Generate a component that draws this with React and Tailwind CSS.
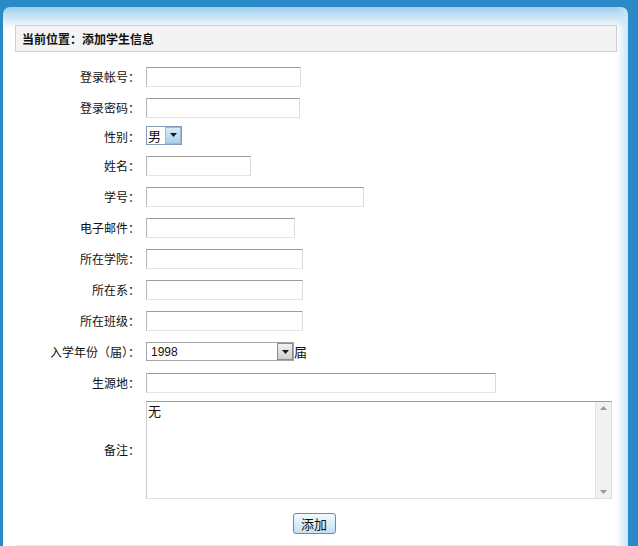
import React from 'react'

const font = { fontFamily: '"Noto Sans CJK SC", "Liberation Sans", sans-serif' }

const rows = [
  { label: '登录帐号：', width: 155 },
  { label: '登录密码：', width: 154 },
  { label: '性别：', type: 'sex' },
  { label: '姓名：', width: 105 },
  { label: '学号：', width: 218 },
  { label: '电子邮件：', width: 149 },
  { label: '所在学院：', width: 157 },
  { label: '所在系：', width: 157 },
  { label: '所在班级：', width: 157 },
  { label: '入学年份（届）：', type: 'year' },
  { label: '生源地：', width: 350 },
]

function TextBox({ width }) {
  return (
    <div
      className="h-[20px] bg-white border border-t-[#9c9c9c] border-l-[#b8b8b8] border-r-[#dcdcdc] border-b-[#e4e4e4]"
      style={{ width }}
    />
  )
}

function Arrow({ tone }) {
  return (
    <div
      className={`w-[16px] h-[17px] flex items-center justify-center border ${
        tone === 'blue'
          ? 'border-[#9ab8cf] bg-gradient-to-b from-[#d8ecf8] to-[#a9d0ea]'
          : 'border-[#8c8c8c] bg-gradient-to-b from-[#f2f2f2] to-[#cfcfcf]'
      }`}
    >
      <svg width="7" height="4" viewBox="0 0 7 4">
        <path d="M0 0h7L3.5 4z" fill="#1a1a1a" />
      </svg>
    </div>
  )
}

export default function App() {
  return (
    <div className="w-[638px] h-[546px] overflow-hidden bg-[#2a8ac8] pt-[7px] pl-[3px] pr-[10px] text-[12px] text-[#111]" style={font}>
      <div className="h-full rounded-t-[7px] bg-[linear-gradient(to_left,#c9e7f6,rgba(255,255,255,0)_12px),linear-gradient(to_bottom,#9dcdec,#ffffff_22px)] pt-[18px] pl-[12px] pr-[11px] flex flex-col">
        {/* 当前位置 */}
        <div className="h-[27px] bg-[#f3f3f3] border border-[#cfcfcf] flex items-center pl-[6px] font-bold text-[12px] text-[#111]">
          当前位置：添加学生信息
        </div>

        <div className="mt-[9px] flex flex-col">
          {rows.map(row => (
            <div key={row.label} className={`flex items-center ${row.type === 'sex' ? 'h-[27px]' : 'h-[31px]'}`}>
              <div className="w-[126px] text-right pr-[1px] leading-none">{row.label}</div>
              <div className="ml-[5px] flex items-center">
                {row.type === 'sex' && (
                  <div className="h-[19px] w-[36px] flex items-center border border-[#7f9db9] bg-white -mt-[3px]">
                    <span className="pl-[1px] w-[18px] text-[13px] leading-none">男</span>
                    <Arrow tone="blue" />
                  </div>
                )}
                {row.type === 'year' && (
                  <>
                    <div className="h-[19px] w-[148px] flex items-center justify-between border border-[#a5a5a5] bg-white">
                      <span className="pl-[4px] text-[12px] leading-none" style={{ fontFamily: '"Liberation Sans", sans-serif' }}>1998</span>
                      <Arrow tone="gray" />
                    </div>
                    <span className="text-[13px] leading-none">届</span>
                  </>
                )}
                {!row.type && <TextBox width={row.width} />}
              </div>
            </div>
          ))}

          {/* 备注 */}
          <div className="flex items-center h-[103px]">
            <div className="w-[126px] text-right pr-[1px] leading-none">备注：</div>
            <div className="ml-[5px] mt-[1px] h-[98px] w-[466px] flex border border-t-[#9c9c9c] border-l-[#c8c8c8] border-r-[#dcdcdc] border-b-[#e0e0e0] bg-white">
              <div className="flex-1 pl-[1px] pt-[1px] text-[13px] leading-[16px]">无</div>
              <div className="w-[16px] bg-[#f1f1f1] border-l border-[#e2e2e2] flex flex-col justify-between items-center py-[4px]">
                <svg width="7" height="4" viewBox="0 0 7 4"><path d="M0 4h7L3.5 0z" fill="#9a9a9a" /></svg>
                <svg width="7" height="4" viewBox="0 0 7 4"><path d="M0 0h7L3.5 4z" fill="#9a9a9a" /></svg>
              </div>
            </div>
          </div>

          <div className="flex justify-center pr-[4px] mt-[12px]">
            <button className="h-[21px] w-[43px] rounded-[3px] border border-[#5b8fb3] bg-gradient-to-b from-[#f3fafe] to-[#c4e0f1] text-[13px] leading-none text-[#111] flex items-center justify-center">
              添加
            </button>
          </div>
        </div>

        <div className="flex-1" />
        <div className="border-b border-[#e6e6e6]" />
      </div>
    </div>
  )
}
